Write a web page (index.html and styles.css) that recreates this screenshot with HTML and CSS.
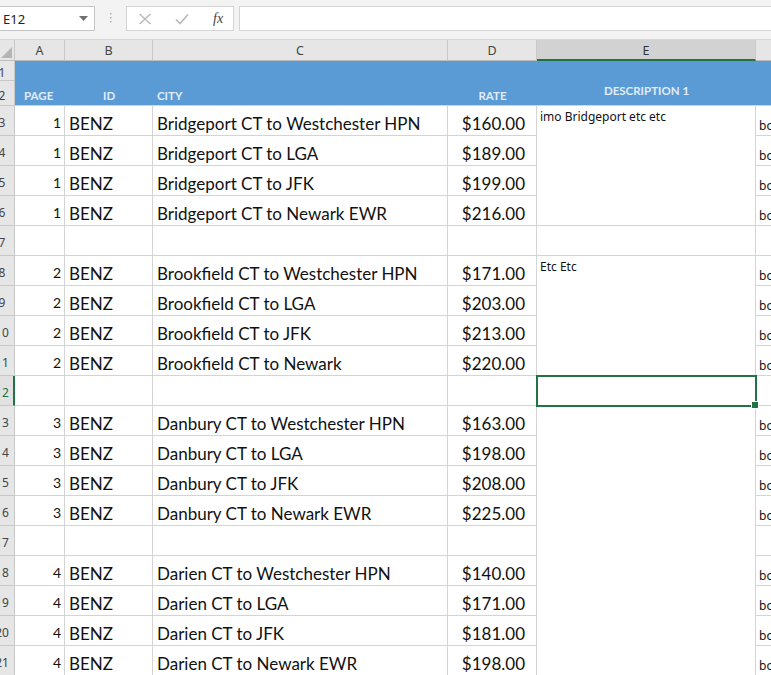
FILE: index.html
```html
<!DOCTYPE html>
<html>
<head>
<meta charset="utf-8">
<link rel="stylesheet" href="styles.css">
</head>
<body>
<div class="toolbar">
  <div class="namebox"><span class="nb-text">E12</span><svg class="nb-arrow" width="9" height="5" viewBox="0 0 9 5"><path d="M0 0H9L4.5 5Z" fill="#707070"/></svg></div>
  <div class="grip"><svg width="3" height="12" viewBox="0 0 3 12"><rect x="1" y="0" width="1.5" height="1.5" fill="#b0b0b0"/><rect x="1" y="4" width="1.5" height="1.5" fill="#b0b0b0"/><rect x="1" y="8" width="1.5" height="1.5" fill="#b0b0b0"/></svg></div>
  <div class="fxbox">
    <svg class="fx-icon" width="14" height="12" viewBox="0 0 14 12"><path d="M1.5 1L12.5 11M12.5 1L1.5 11" stroke="#b8b8b8" stroke-width="1.4" fill="none"/></svg>
    <svg class="fx-icon" width="14" height="12" viewBox="0 0 14 12"><path d="M1 6.5L5 10.5L13 1.5" stroke="#b8b8b8" stroke-width="1.6" fill="none"/></svg>
    <span class="fx-label">fx</span>
  </div>
  <div class="formula"></div>
</div>
<div class="sheet">
  <div class="corner"><svg width="11" height="11" viewBox="0 0 11 11"><path d="M11 0V11H0Z" fill="#b5b5b5"/></svg></div>
  <div class="ch">A</div>
  <div class="ch">B</div>
  <div class="ch">C</div>
  <div class="ch">D</div>
  <div class="ch ch-sel">E</div>
  <div class="ch ch-last"></div>

  <div class="rh"><span>1</span></div>
  <div class="bh bh-a">PAGE</div>
  <div class="bh bh-b">ID</div>
  <div class="bh bh-c">CITY</div>
  <div class="bh bh-d">RATE</div>
  <div class="bh bh-e">DESCRIPTION 1</div>
  <div class="bh bh-f"></div>
  <div class="rh"><span>2</span></div>

  <div class="rh"><span>3</span></div>
  <div class="c num">1</div><div class="c">BENZ</div><div class="c">Bridgeport CT to Westchester HPN</div><div class="c cur">$160.00</div>
  <div class="c e span4"><span class="note">imo Bridgeport etc etc</span></div>
  <div class="c f">bo</div>
  <div class="rh"><span>4</span></div>
  <div class="c num">1</div><div class="c">BENZ</div><div class="c">Bridgeport CT to LGA</div><div class="c cur">$189.00</div><div class="c f">bo</div>
  <div class="rh"><span>5</span></div>
  <div class="c num">1</div><div class="c">BENZ</div><div class="c">Bridgeport CT to JFK</div><div class="c cur">$199.00</div><div class="c f">bo</div>
  <div class="rh"><span>6</span></div>
  <div class="c num">1</div><div class="c">BENZ</div><div class="c">Bridgeport CT to Newark EWR</div><div class="c cur">$216.00</div><div class="c f">bo</div>

  <div class="rh"><span>7</span></div>
  <div class="c"></div><div class="c"></div><div class="c"></div><div class="c"></div><div class="c e"></div><div class="c f"></div>

  <div class="rh"><span>8</span></div>
  <div class="c num">2</div><div class="c">BENZ</div><div class="c">Brookfield CT to Westchester HPN</div><div class="c cur">$171.00</div>
  <div class="c e span4"><span class="note">Etc Etc</span></div>
  <div class="c f">bo</div>
  <div class="rh"><span>9</span></div>
  <div class="c num">2</div><div class="c">BENZ</div><div class="c">Brookfield CT to LGA</div><div class="c cur">$203.00</div><div class="c f">bo</div>
  <div class="rh"><span>10</span></div>
  <div class="c num">2</div><div class="c">BENZ</div><div class="c">Brookfield CT to JFK</div><div class="c cur">$213.00</div><div class="c f">bo</div>
  <div class="rh"><span>11</span></div>
  <div class="c num">2</div><div class="c">BENZ</div><div class="c">Brookfield CT to Newark</div><div class="c cur">$220.00</div><div class="c f">bo</div>

  <div class="rh rh-sel"><span>12</span></div>
  <div class="c"></div><div class="c"></div><div class="c"></div><div class="c"></div><div class="c e sel"><span class="handle"></span></div><div class="c f"></div>

  <div class="rh"><span>13</span></div>
  <div class="c num">3</div><div class="c">BENZ</div><div class="c">Danbury CT to Westchester HPN</div><div class="c cur">$163.00</div>
  <div class="c e span9"></div>
  <div class="c f">bo</div>
  <div class="rh"><span>14</span></div>
  <div class="c num">3</div><div class="c">BENZ</div><div class="c">Danbury CT to LGA</div><div class="c cur">$198.00</div><div class="c f">bo</div>
  <div class="rh"><span>15</span></div>
  <div class="c num">3</div><div class="c">BENZ</div><div class="c">Danbury CT to JFK</div><div class="c cur">$208.00</div><div class="c f">bo</div>
  <div class="rh"><span>16</span></div>
  <div class="c num">3</div><div class="c">BENZ</div><div class="c">Danbury CT to Newark EWR</div><div class="c cur">$225.00</div><div class="c f">bo</div>

  <div class="rh"><span>17</span></div>
  <div class="c"></div><div class="c"></div><div class="c"></div><div class="c"></div><div class="c f"></div>

  <div class="rh"><span>18</span></div>
  <div class="c num">4</div><div class="c">BENZ</div><div class="c">Darien CT to Westchester HPN</div><div class="c cur">$140.00</div><div class="c f">bo</div>
  <div class="rh"><span>19</span></div>
  <div class="c num">4</div><div class="c">BENZ</div><div class="c">Darien CT to LGA</div><div class="c cur">$171.00</div><div class="c f">bo</div>
  <div class="rh"><span>20</span></div>
  <div class="c num">4</div><div class="c">BENZ</div><div class="c">Darien CT to JFK</div><div class="c cur">$181.00</div><div class="c f">bo</div>
  <div class="rh"><span>21</span></div>
  <div class="c num">4</div><div class="c">BENZ</div><div class="c">Darien CT to Newark EWR</div><div class="c cur">$198.00</div><div class="c f">bo</div>
</div>
</body>
</html>
```
FILE: styles.css
```css
html, body {
  margin: 0;
  padding: 0;
}
body {
  width: 771px;
  height: 675px;
  overflow: hidden;
  background: #ffffff;
  font-family: Lato, "Liberation Sans", sans-serif;
}

/* ---------- formula bar ---------- */
.toolbar {
  height: 40px;
  box-sizing: border-box;
  background: #f3f3f3;
  border-bottom: 1px solid #d6d6d6;
  display: flex;
  align-items: flex-start;
  padding-top: 6px;
}
.namebox {
  width: 96px;
  height: 25px;
  margin-left: -1px;
  box-sizing: border-box;
  background: #fff;
  border: 1px solid #c6c6c6;
  display: flex;
  align-items: center;
  padding-left: 3px;
  padding-right: 6px;
  font-family: "Noto Sans", sans-serif;
  font-size: 13px;
  color: #222;
}
.nb-text { flex: 1; }
.nb-arrow { display: block; }
.grip {
  width: 31px;
  height: 25px;
  display: flex;
  align-items: center;
  justify-content: center;
}
.grip svg { display: block; }
.fxbox {
  width: 108px;
  height: 25px;
  box-sizing: border-box;
  background: #fff;
  border: 1px solid #d4d4d4;
  display: flex;
  align-items: center;
  padding-left: 11px;
  gap: 23px;
}
.fx-icon { display: block; }
.fx-label {
  font-family: "Liberation Serif", serif;
  font-style: italic;
  font-size: 14px;
  color: #444;
  margin-left: 1px;
}
.formula {
  flex: 1;
  height: 25px;
  margin-left: 5px;
  box-sizing: border-box;
  background: #fff;
  border: 1px solid #d4d4d4;
  border-right: none;
}

/* ---------- sheet grid ---------- */
.sheet {
  display: grid;
  grid-template-columns: 15px 50px 88px 295px 89px 219px 1fr;
  grid-template-rows: 21px 20px 25px repeat(19, 30px);
}
.corner {
  background: #e6e6e6;
  border-right: 1px solid #c8c8c8;
  border-bottom: 1px solid #bdbdbd;
  box-sizing: border-box;
  display: flex;
  align-items: flex-end;
  justify-content: flex-end;
  padding: 0 2px 2px 0;
}
.corner svg { display: block; }
.ch {
  background: #e6e6e6;
  border-right: 1px solid #c8c8c8;
  border-bottom: 1px solid #bdbdbd;
  box-sizing: border-box;
  display: flex;
  align-items: center;
  justify-content: center;
  font-family: "Noto Sans", sans-serif;
  font-size: 12.5px;
  color: #444;
  padding-top: 1px;
}
.ch-sel {
  background: #d2d2d2;
  border-bottom: 2px solid #217346;
  color: #333;
}
.ch-last { border-right: none; }

.rh {
  background: #e6e6e6;
  border-right: 1px solid #c8c8c8;
  border-bottom: 1px solid #c8c8c8;
  box-sizing: border-box;
  overflow: hidden;
  display: flex;
  align-items: center;
  font-family: "Noto Sans", sans-serif;
  font-size: 12px;
  color: #444;
}
.rh span {
  display: block;
  width: 24px;
  flex: none;
  margin-left: -10px;
  text-align: center;
  padding-top: 4px;
}
.rh-sel {
  background: #e1e1e1;
  border-right: 2px solid #217346;
  color: #217346;
}

/* blue header band */
.bh {
  grid-row: span 2;
  background: #5b9bd5;
  color: #e0ecf8;
  font-weight: bold;
  font-size: 11.5px;
  display: flex;
  align-items: flex-end;
  padding: 0 4px 3px 4px;
  box-sizing: border-box;
  border-bottom: 1px solid #c8d8e8;
}
.bh-a { padding-left: 9px; }
.bh-b { padding-left: 38px; }
.bh-d { justify-content: center; padding-left: 0; padding-right: 0; }
.bh-e {
  justify-content: center;
  padding: 0 0 8px 0;
}

/* data cells */
.c {
  border-right: 1px solid #d4d4d4;
  border-bottom: 1px solid #d4d4d4;
  box-sizing: border-box;
  display: flex;
  align-items: flex-end;
  padding: 0 4px 1px 4px;
  font-size: 17px;
  line-height: 20px;
  color: #111;
  white-space: nowrap;
  overflow: hidden;
  background: #fff;
}
.num {
  justify-content: flex-end;
  padding-right: 3px;
  font-size: 14px;
  padding-bottom: 2px;
}
.cur { justify-content: flex-end; padding-right: 11px; }
.e {
  position: relative;
  overflow: visible;
  align-items: flex-start;
  padding: 3px 3px 0 3px;
}
.span4 { grid-row: span 4; }
.span9 { grid-row: span 9; }
.note {
  font-family: "Noto Sans", sans-serif;
  font-size: 12px;
  line-height: 16px;
  color: #111;
}
.f {
  border-right: none;
  font-family: "Noto Sans", sans-serif;
  font-size: 12px;
  line-height: 16px;
  padding: 0 0 1px 3px;
}
.sel {
  outline: 2px solid #217346;
  outline-offset: -1px;
  z-index: 2;
}
.handle {
  position: absolute;
  right: -4px;
  bottom: -4px;
  width: 6px;
  height: 6px;
  background: #217346;
  border: 1px solid #fff;
}
```
